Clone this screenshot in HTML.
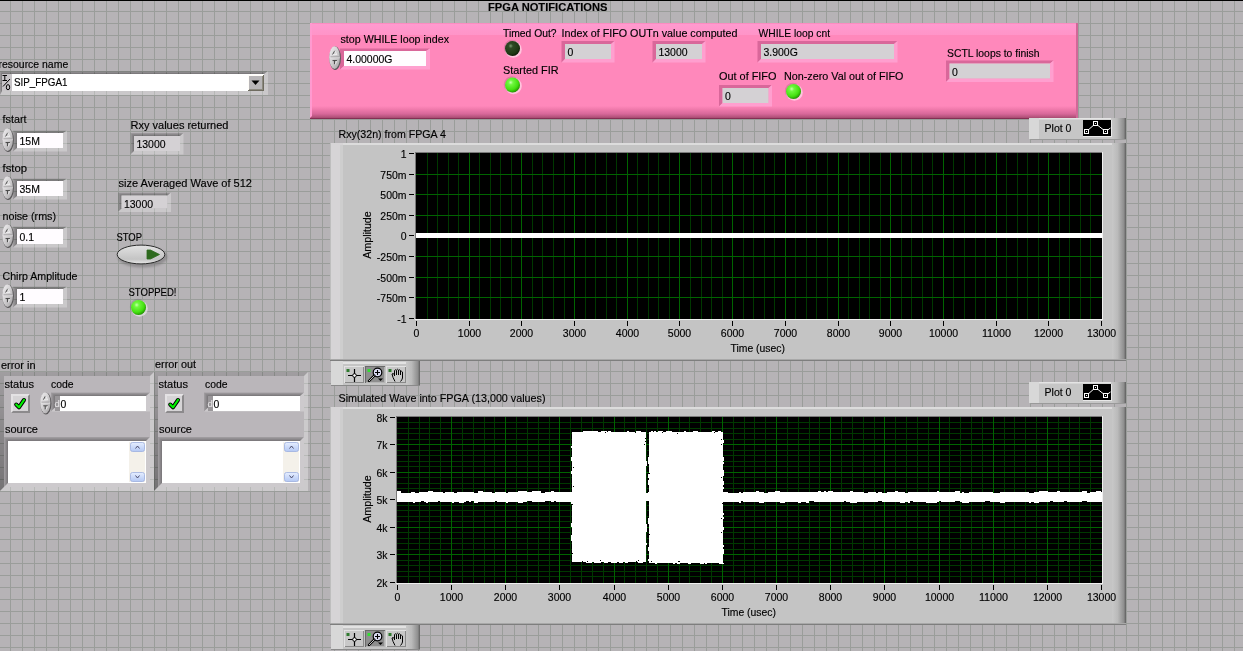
<!DOCTYPE html>
<html><head><meta charset="utf-8"><style>
html,body{margin:0;padding:0;width:1243px;height:651px;overflow:hidden;background:#B6B3B6}
svg{display:block;font-family:'Liberation Sans',sans-serif;will-change:transform}
text{font-family:'Liberation Sans',sans-serif}
</style></head><body>
<svg width="1243" height="651" viewBox="0 0 1243 651" shape-rendering="auto">
<defs>
<pattern id="grid" x="0" y="0" width="12" height="12" patternUnits="userSpaceOnUse" patternTransform="translate(10 11)">
<rect x="0" y="0" width="1" height="12" fill="#9A9D9A"/><rect x="0" y="0" width="12" height="1" fill="#9A9D9A"/></pattern>
<linearGradient id="pinktop" x1="0" y1="0" x2="0" y2="1"><stop offset="0" stop-color="#F984BA"/><stop offset="0.12" stop-color="#FF9ACF"/><stop offset="1" stop-color="#FF94C8"/></linearGradient>
<linearGradient id="pinkbot" x1="0" y1="0" x2="0" y2="1"><stop offset="0" stop-color="#FF88BB"/><stop offset="0.25" stop-color="#F07AAC"/><stop offset="0.6" stop-color="#D8689A"/><stop offset="0.88" stop-color="#B05078"/><stop offset="1" stop-color="#702044"/></linearGradient>
<linearGradient id="cyl" x1="0" y1="0" x2="1" y2="0"><stop offset="0" stop-color="#C8C8C8"/><stop offset="0.4" stop-color="#BABABA"/><stop offset="0.85" stop-color="#8E8E8E"/><stop offset="1" stop-color="#5E5E5E"/></linearGradient>
<radialGradient id="ledon" cx="0.38" cy="0.33" r="0.7"><stop offset="0" stop-color="#C8FFB0"/><stop offset="0.22" stop-color="#70F840"/><stop offset="0.7" stop-color="#44E010"/><stop offset="1" stop-color="#209000"/></radialGradient>
<radialGradient id="ledoff" cx="0.38" cy="0.33" r="0.7"><stop offset="0" stop-color="#7A9A70"/><stop offset="0.22" stop-color="#2E4A24"/><stop offset="0.75" stop-color="#1E3814"/><stop offset="1" stop-color="#0C1A06"/></radialGradient>
<linearGradient id="spin" x1="0" y1="0" x2="1" y2="1"><stop offset="0" stop-color="#F0EEF0"/><stop offset="0.45" stop-color="#D4D2D4"/><stop offset="1" stop-color="#A4A2A4"/></linearGradient>
<linearGradient id="btn" x1="0" y1="0" x2="0" y2="1"><stop offset="0" stop-color="#E4E4E4"/><stop offset="0.3" stop-color="#D6D6D6"/><stop offset="0.75" stop-color="#C4C4C4"/><stop offset="1" stop-color="#E8E8E8"/></linearGradient>
<filter id="blur1" x="-20%" y="-30%" width="140%" height="160%"><feGaussianBlur stdDeviation="1.2"/></filter>
<linearGradient id="sb" x1="0" y1="0" x2="0" y2="1"><stop offset="0" stop-color="#E6EEFF"/><stop offset="1" stop-color="#B4C8F4"/></linearGradient>
<linearGradient id="ftop" x1="0" y1="0" x2="0" y2="1"><stop offset="0" stop-color="#000" stop-opacity="0.12"/><stop offset="1" stop-color="#000" stop-opacity="0.36"/></linearGradient>
<linearGradient id="fleft" x1="0" y1="0" x2="1" y2="0"><stop offset="0" stop-color="#000" stop-opacity="0.12"/><stop offset="1" stop-color="#000" stop-opacity="0.36"/></linearGradient>
</defs>
<rect width="1243" height="651" fill="#B6B3B6"/>
<rect width="1243" height="651" fill="url(#grid)"/>
<rect x="0" y="0" width="1243" height="1" fill="#000" />
<rect x="487" y="1" width="122" height="10" fill="#B6B3B6" />
<text x="488" y="11" font-size="11" textLength="119.5" lengthAdjust="spacingAndGlyphs" font-weight="bold" stroke="#000" stroke-width="0.15" fill="#000" >FPGA NOTIFICATIONS</text>
<rect x="310" y="23" width="768" height="96" fill="#FF88BB" />
<rect x="310" y="23" width="768" height="12" fill="url(#pinktop)" />
<rect x="310" y="106" width="768" height="13" fill="url(#pinkbot)" />
<path d="M310 23 H312 V116 L310 118 Z" fill="#FF9AD0"/>
<rect x="1076" y="23" width="2" height="96" fill="#D06898" />
<text x="340.5" y="43" font-size="11" textLength="108.5" lengthAdjust="spacingAndGlyphs" stroke="#000" stroke-width="0.15" fill="#000" >stop WHILE loop index</text>
<path d="M340 48.5 H430 L426 51.0 H344 V66.0 L340 69.5 Z" fill="#D9679A"/>
<path d="M430 48.5 V69.5 H340 L344 66.0 H426 V51.0 Z" fill="#FF9FCF"/>
<rect x="344" y="51" width="82" height="15" fill="#FFFCFF" />
<ellipse cx="335.15" cy="58.15" rx="5.75" ry="11.75" fill="#5a585a"/>
<ellipse cx="334.55" cy="57.55" rx="5.35" ry="11.35" fill="url(#spin)"/>
<rect x="330" y="57.25" width="9.5" height="1" fill="#E6E4E6"/>
<rect x="330.5" y="56.45" width="8.5" height="0.8" fill="#9C9A9C"/>
<path d="M332.25 54.75 L334.75 50.25 L337.25 54.75 Z" fill="#D8D6D8"/>
<path d="M332.55 54.55 L334.75 50.75" stroke="#3a3a3a" stroke-width="0.9"/>
<path d="M334.75 50.75 L336.95 54.55 H332.75" fill="none" stroke="#F4F4F4" stroke-width="0.7"/>
<path d="M332.25 60.25 H337.25 L334.75 64.75 Z" fill="#C8C6C8"/>
<path d="M332.55 60.55 H336.95 M334.45 60.75 V64.25" stroke="#3a3a3a" stroke-width="0.9"/>
<path d="M336.95 60.95 L335.15 64.55" stroke="#F4F4F4" stroke-width="0.7"/>
<text x="346.5" y="63" font-size="11" textLength="45.91" lengthAdjust="spacingAndGlyphs" stroke="#000" stroke-width="0.15" fill="#000" >4.00000G</text>
<text x="503" y="36.5" font-size="11" textLength="53.5" lengthAdjust="spacingAndGlyphs" stroke="#000" stroke-width="0.15" fill="#000" >Timed Out?</text>
<circle cx="513.4" cy="49.4" r="8.4" fill="#ffffff" opacity="0.5"/>
<circle cx="511.9" cy="47.9" r="8.1" fill="#000000" opacity="0.12"/>
<circle cx="512.5" cy="48.5" r="7.5" fill="url(#ledoff)"/>
<text x="503" y="73.5" font-size="11" textLength="55.5" lengthAdjust="spacingAndGlyphs" stroke="#000" stroke-width="0.15" fill="#000" >Started FIR</text>
<circle cx="513.4" cy="85.9" r="8.4" fill="#ffffff" opacity="0.5"/>
<circle cx="511.9" cy="84.4" r="8.1" fill="#000000" opacity="0.12"/>
<circle cx="512.5" cy="85" r="7.5" fill="url(#ledon)"/>
<text x="561.5" y="36.5" font-size="11" textLength="176" lengthAdjust="spacingAndGlyphs" stroke="#000" stroke-width="0.15" fill="#000" >Index of FIFO OUTn value computed</text>
<path d="M561.5 41 H614.5 L611.0 44 H565.0 V59.0 L561.5 62.5 Z" fill="#D9679A"/>
<path d="M614.5 41 V62.5 H561.5 L565.0 59.0 H611.0 V44 Z" fill="#FF9FCF"/>
<rect x="565" y="44" width="46" height="15" fill="#D4D1D4" />
<text x="567.5" y="56" font-size="11" textLength="5.82" lengthAdjust="spacingAndGlyphs" stroke="#000" stroke-width="0.15" fill="#000" >0</text>
<path d="M652.5 41 H705.5 L702.0 44 H656.0 V59.0 L652.5 62.5 Z" fill="#D9679A"/>
<path d="M705.5 41 V62.5 H652.5 L656.0 59.0 H702.0 V44 Z" fill="#FF9FCF"/>
<rect x="656" y="44" width="46" height="15" fill="#D4D1D4" />
<text x="658.5" y="56" font-size="11" textLength="29.06" lengthAdjust="spacingAndGlyphs" stroke="#000" stroke-width="0.15" fill="#000" >13000</text>
<text x="758.5" y="36.5" font-size="11" textLength="71.5" lengthAdjust="spacingAndGlyphs" stroke="#000" stroke-width="0.15" fill="#000" >WHILE loop cnt</text>
<path d="M757.5 41 H897.5 L894.0 44 H761.0 V59.0 L757.5 62.5 Z" fill="#D9679A"/>
<path d="M897.5 41 V62.5 H757.5 L761.0 59.0 H894.0 V44 Z" fill="#FF9FCF"/>
<rect x="761" y="44" width="133" height="15" fill="#D4D1D4" />
<text x="763.5" y="56" font-size="11" textLength="34.29" lengthAdjust="spacingAndGlyphs" stroke="#000" stroke-width="0.15" fill="#000" >3.900G</text>
<text x="719" y="80" font-size="11" textLength="57.5" lengthAdjust="spacingAndGlyphs" stroke="#000" stroke-width="0.15" fill="#000" >Out of FIFO</text>
<path d="M719.0 85 H772.0 L768.5 88 H722.5 V103.0 L719.0 106.5 Z" fill="#D9679A"/>
<path d="M772.0 85 V106.5 H719.0 L722.5 103.0 H768.5 V88 Z" fill="#FF9FCF"/>
<rect x="722.5" y="88" width="46" height="15" fill="#D4D1D4" />
<text x="725.0" y="100" font-size="11" textLength="5.82" lengthAdjust="spacingAndGlyphs" stroke="#000" stroke-width="0.15" fill="#000" >0</text>
<text x="784" y="80" font-size="11" textLength="119.5" lengthAdjust="spacingAndGlyphs" stroke="#000" stroke-width="0.15" fill="#000" >Non-zero Val out of FIFO</text>
<circle cx="794.4" cy="92.4" r="8.4" fill="#ffffff" opacity="0.5"/>
<circle cx="792.9" cy="90.9" r="8.1" fill="#000000" opacity="0.12"/>
<circle cx="793.5" cy="91.5" r="7.5" fill="url(#ledon)"/>
<text x="947" y="57" font-size="11" textLength="92.5" lengthAdjust="spacingAndGlyphs" stroke="#000" stroke-width="0.15" fill="#000" >SCTL loops to finish</text>
<path d="M946.0 60.5 H1053.5 L1050.0 63.5 H949.5 V78.5 L946.0 82.0 Z" fill="#D9679A"/>
<path d="M1053.5 60.5 V82.0 H946.0 L949.5 78.5 H1050.0 V63.5 Z" fill="#FF9FCF"/>
<rect x="949.5" y="63.5" width="100.5" height="15" fill="#D4D1D4" />
<text x="952.0" y="75.5" font-size="11" textLength="5.82" lengthAdjust="spacingAndGlyphs" stroke="#000" stroke-width="0.15" fill="#000" >0</text>
<text x="-1.5" y="67.5" font-size="11" textLength="69.71" lengthAdjust="spacingAndGlyphs" stroke="#000" stroke-width="0.15" fill="#000" >resource name</text>
<path d="M0 71 H268 L264 74 H2 L0 71 Z" fill="url(#ftop)"/>
<path d="M0 71 L2 74 V91 L0 95 Z" fill="url(#fleft)"/>
<path d="M268 71 V95 H0 L2 91 H264 V74 Z" fill="#FFFFFF" fill-opacity="0.28"/>
<rect x="2" y="74" width="10" height="17" fill="#C8C5C8" />
<path d="M2.5 75.5 H7 M4.8 75.5 V80.5 M2.5 80.5 H7" fill="none" stroke="#000" stroke-width="1"/>
<path d="M3 86.5 L10 79" stroke="#000" stroke-width="1"/>
<ellipse cx="8" cy="87.2" rx="1.7" ry="2.6" fill="none" stroke="#000" stroke-width="1"/>
<rect x="12" y="74" width="252" height="17" fill="#FFFFFF" />
<text x="14" y="86" font-size="11" textLength="53.5" lengthAdjust="spacingAndGlyphs" stroke="#000" stroke-width="0.15" fill="#000" >SIP_FPGA1</text>
<rect x="247" y="74" width="17" height="17" fill="#FFFFFF" />
<rect x="248" y="75" width="16" height="16" fill="#6F6C60" />
<rect x="248" y="75" width="15" height="15" fill="#FFFDF8" />
<rect x="249" y="76" width="14" height="14" fill="#8C8A80" />
<rect x="249" y="76" width="13" height="13" fill="#B8B6B8" />
<path d="M251.5 80.5 H259.5 L255.5 85 Z" fill="#000"/>
<text x="2.5" y="123" font-size="11" textLength="24" lengthAdjust="spacingAndGlyphs" stroke="#000" stroke-width="0.15" fill="#000" >fstart</text>
<path d="M13 130.5 H67 L63 133.0 H17 L13 130.5 Z" fill="url(#ftop)"/>
<path d="M13 130.5 L17 133.0 V148.0 L13 151.5 Z" fill="url(#fleft)"/>
<path d="M67 130.5 V151.5 H13 L17 148.0 H63 V133.0 Z" fill="#FFFFFF" fill-opacity="0.28"/>
<rect x="17" y="133" width="46" height="15" fill="#FFFCFF" />
<ellipse cx="8.15" cy="140.15" rx="5.75" ry="11.75" fill="#5a585a"/>
<ellipse cx="7.55" cy="139.55" rx="5.35" ry="11.35" fill="url(#spin)"/>
<rect x="3" y="139.25" width="9.5" height="1" fill="#E6E4E6"/>
<rect x="3.5" y="138.45" width="8.5" height="0.8" fill="#9C9A9C"/>
<path d="M5.25 136.75 L7.75 132.25 L10.25 136.75 Z" fill="#D8D6D8"/>
<path d="M5.55 136.55 L7.75 132.75" stroke="#3a3a3a" stroke-width="0.9"/>
<path d="M7.75 132.75 L9.95 136.55 H5.75" fill="none" stroke="#F4F4F4" stroke-width="0.7"/>
<path d="M5.25 142.25 H10.25 L7.75 146.75 Z" fill="#C8C6C8"/>
<path d="M5.55 142.55 H9.95 M7.45 142.75 V146.25" stroke="#3a3a3a" stroke-width="0.9"/>
<path d="M9.95 142.95 L8.15 146.55" stroke="#F4F4F4" stroke-width="0.7"/>
<text x="19.5" y="145" font-size="11" textLength="20.34" lengthAdjust="spacingAndGlyphs" stroke="#000" stroke-width="0.15" fill="#000" >15M</text>
<text x="2.5" y="172" font-size="11" textLength="24.5" lengthAdjust="spacingAndGlyphs" stroke="#000" stroke-width="0.15" fill="#000" >fstop</text>
<path d="M13 178.5 H67 L63 181.0 H17 L13 178.5 Z" fill="url(#ftop)"/>
<path d="M13 178.5 L17 181.0 V196.0 L13 199.5 Z" fill="url(#fleft)"/>
<path d="M67 178.5 V199.5 H13 L17 196.0 H63 V181.0 Z" fill="#FFFFFF" fill-opacity="0.28"/>
<rect x="17" y="181" width="46" height="15" fill="#FFFCFF" />
<ellipse cx="8.15" cy="188.15" rx="5.75" ry="11.75" fill="#5a585a"/>
<ellipse cx="7.55" cy="187.55" rx="5.35" ry="11.35" fill="url(#spin)"/>
<rect x="3" y="187.25" width="9.5" height="1" fill="#E6E4E6"/>
<rect x="3.5" y="186.45" width="8.5" height="0.8" fill="#9C9A9C"/>
<path d="M5.25 184.75 L7.75 180.25 L10.25 184.75 Z" fill="#D8D6D8"/>
<path d="M5.55 184.55 L7.75 180.75" stroke="#3a3a3a" stroke-width="0.9"/>
<path d="M7.75 180.75 L9.95 184.55 H5.75" fill="none" stroke="#F4F4F4" stroke-width="0.7"/>
<path d="M5.25 190.25 H10.25 L7.75 194.75 Z" fill="#C8C6C8"/>
<path d="M5.55 190.55 H9.95 M7.45 190.75 V194.25" stroke="#3a3a3a" stroke-width="0.9"/>
<path d="M9.95 190.95 L8.15 194.55" stroke="#F4F4F4" stroke-width="0.7"/>
<text x="19.5" y="193" font-size="11" textLength="20.34" lengthAdjust="spacingAndGlyphs" stroke="#000" stroke-width="0.15" fill="#000" >35M</text>
<text x="2.5" y="220" font-size="11" textLength="53.5" lengthAdjust="spacingAndGlyphs" stroke="#000" stroke-width="0.15" fill="#000" >noise (rms)</text>
<path d="M13 226.5 H67 L63 229.0 H17 L13 226.5 Z" fill="url(#ftop)"/>
<path d="M13 226.5 L17 229.0 V244.0 L13 247.5 Z" fill="url(#fleft)"/>
<path d="M67 226.5 V247.5 H13 L17 244.0 H63 V229.0 Z" fill="#FFFFFF" fill-opacity="0.28"/>
<rect x="17" y="229" width="46" height="15" fill="#FFFCFF" />
<ellipse cx="8.15" cy="236.15" rx="5.75" ry="11.75" fill="#5a585a"/>
<ellipse cx="7.55" cy="235.55" rx="5.35" ry="11.35" fill="url(#spin)"/>
<rect x="3" y="235.25" width="9.5" height="1" fill="#E6E4E6"/>
<rect x="3.5" y="234.45" width="8.5" height="0.8" fill="#9C9A9C"/>
<path d="M5.25 232.75 L7.75 228.25 L10.25 232.75 Z" fill="#D8D6D8"/>
<path d="M5.55 232.55 L7.75 228.75" stroke="#3a3a3a" stroke-width="0.9"/>
<path d="M7.75 228.75 L9.95 232.55 H5.75" fill="none" stroke="#F4F4F4" stroke-width="0.7"/>
<path d="M5.25 238.25 H10.25 L7.75 242.75 Z" fill="#C8C6C8"/>
<path d="M5.55 238.55 H9.95 M7.45 238.75 V242.25" stroke="#3a3a3a" stroke-width="0.9"/>
<path d="M9.95 238.95 L8.15 242.55" stroke="#F4F4F4" stroke-width="0.7"/>
<text x="19.5" y="241" font-size="11" textLength="14.53" lengthAdjust="spacingAndGlyphs" stroke="#000" stroke-width="0.15" fill="#000" >0.1</text>
<text x="2.5" y="280" font-size="11" textLength="75" lengthAdjust="spacingAndGlyphs" stroke="#000" stroke-width="0.15" fill="#000" >Chirp Amplitude</text>
<path d="M13 286.5 H67 L63 289.0 H17 L13 286.5 Z" fill="url(#ftop)"/>
<path d="M13 286.5 L17 289.0 V304.0 L13 307.5 Z" fill="url(#fleft)"/>
<path d="M67 286.5 V307.5 H13 L17 304.0 H63 V289.0 Z" fill="#FFFFFF" fill-opacity="0.28"/>
<rect x="17" y="289" width="46" height="15" fill="#FFFCFF" />
<ellipse cx="8.15" cy="296.15" rx="5.75" ry="11.75" fill="#5a585a"/>
<ellipse cx="7.55" cy="295.55" rx="5.35" ry="11.35" fill="url(#spin)"/>
<rect x="3" y="295.25" width="9.5" height="1" fill="#E6E4E6"/>
<rect x="3.5" y="294.45" width="8.5" height="0.8" fill="#9C9A9C"/>
<path d="M5.25 292.75 L7.75 288.25 L10.25 292.75 Z" fill="#D8D6D8"/>
<path d="M5.55 292.55 L7.75 288.75" stroke="#3a3a3a" stroke-width="0.9"/>
<path d="M7.75 288.75 L9.95 292.55 H5.75" fill="none" stroke="#F4F4F4" stroke-width="0.7"/>
<path d="M5.25 298.25 H10.25 L7.75 302.75 Z" fill="#C8C6C8"/>
<path d="M5.55 298.55 H9.95 M7.45 298.75 V302.25" stroke="#3a3a3a" stroke-width="0.9"/>
<path d="M9.95 298.95 L8.15 302.55" stroke="#F4F4F4" stroke-width="0.7"/>
<text x="19.5" y="301" font-size="11" textLength="5.82" lengthAdjust="spacingAndGlyphs" stroke="#000" stroke-width="0.15" fill="#000" >1</text>
<text x="130.5" y="128.5" font-size="11" textLength="98" lengthAdjust="spacingAndGlyphs" stroke="#000" stroke-width="0.15" fill="#000" >Rxy values returned</text>
<path d="M130.5 133 H183.5 L180.0 136 H134.0 L130.5 133 Z" fill="url(#ftop)"/>
<path d="M130.5 133 L134.0 136 V151.0 L130.5 154.5 Z" fill="url(#fleft)"/>
<path d="M183.5 133 V154.5 H130.5 L134.0 151.0 H180.0 V136 Z" fill="#FFFFFF" fill-opacity="0.28"/>
<rect x="134" y="136" width="46" height="15" fill="#D4D1D4" />
<text x="136.5" y="148" font-size="11" textLength="29.06" lengthAdjust="spacingAndGlyphs" stroke="#000" stroke-width="0.15" fill="#000" >13000</text>
<text x="118.5" y="187" font-size="11" textLength="133.5" lengthAdjust="spacingAndGlyphs" stroke="#000" stroke-width="0.15" fill="#000" >size Averaged Wave of 512</text>
<path d="M118.0 192.5 H171.0 L167.5 195.5 H121.5 L118.0 192.5 Z" fill="url(#ftop)"/>
<path d="M118.0 192.5 L121.5 195.5 V208.5 L118.0 212.0 Z" fill="url(#fleft)"/>
<path d="M171.0 192.5 V212.0 H118.0 L121.5 208.5 H167.5 V195.5 Z" fill="#FFFFFF" fill-opacity="0.28"/>
<rect x="121.5" y="195.5" width="46" height="13" fill="#D4D1D4" />
<text x="124.0" y="207.5" font-size="11" textLength="29.06" lengthAdjust="spacingAndGlyphs" stroke="#000" stroke-width="0.15" fill="#000" >13000</text>
<text x="116.5" y="240.5" font-size="11" textLength="25.5" lengthAdjust="spacingAndGlyphs" stroke="#000" stroke-width="0.15" fill="#000" >STOP</text>
<ellipse cx="142.5" cy="257" rx="25" ry="10.5" fill="#6e6c6e" opacity="0.5" filter="url(#blur1)"/>
<ellipse cx="141" cy="254.5" rx="23.8" ry="9.4" fill="url(#btn)" stroke="#2a2a2a" stroke-width="1"/>
<path d="M147 250 H150.5 L159.5 254.5 L150.5 259 H147 Z" fill="#2E6A1E" stroke="#2E6A1E" stroke-width="0.8" stroke-linejoin="round"/>
<text x="128.5" y="296" font-size="11" textLength="48" lengthAdjust="spacingAndGlyphs" stroke="#000" stroke-width="0.15" fill="#000" >STOPPED!</text>
<circle cx="139.4" cy="308.4" r="8.4" fill="#ffffff" opacity="0.5"/>
<circle cx="137.9" cy="306.9" r="8.1" fill="#000000" opacity="0.12"/>
<circle cx="138.5" cy="307.5" r="7.5" fill="url(#ledon)"/>
<text x="1" y="368.5" font-size="11" textLength="34.5" lengthAdjust="spacingAndGlyphs" stroke="#000" stroke-width="0.15" fill="#000" >error in</text>
<path d="M0 372 H154 L150 376 H4 V487 L0 491 Z" fill="url(#ftop)"/>
<path d="M154 372 V491 H0 L4 487 H150 V376 Z" fill="#FFFFFF" fill-opacity="0.3"/>
<rect x="4" y="376" width="146" height="111" fill="#BAB6BA" />
<text x="4.5" y="388" font-size="11" textLength="29.5" lengthAdjust="spacingAndGlyphs" stroke="#000" stroke-width="0.15" fill="#000" >status</text>
<text x="51" y="388" font-size="11" textLength="22.5" lengthAdjust="spacingAndGlyphs" stroke="#000" stroke-width="0.15" fill="#000" >code</text>
<rect x="11" y="394" width="19" height="19" fill="#E4E2E4" />
<path d="M30 394 V413 H11 L13 411 H28 V396 Z" fill="#8C8A8C"/>
<rect x="13" y="396" width="15" height="15" fill="#D6D4D6" />
<path d="M16.2 404.5 L19 407.3 L24 400" fill="none" stroke="#000" stroke-width="4" stroke-linejoin="round" stroke-linecap="round"/>
<path d="M16.2 404.5 L19 407.3 L24 400" fill="none" stroke="#00F000" stroke-width="2.2" stroke-linejoin="round" stroke-linecap="round"/>
<ellipse cx="45.9" cy="403.4" rx="5.5" ry="11.0" fill="#5a585a"/>
<ellipse cx="45.3" cy="402.8" rx="5.1" ry="10.6" fill="url(#spin)"/>
<rect x="41" y="402.5" width="9" height="1" fill="#E6E4E6"/>
<rect x="41.5" y="401.7" width="8" height="0.8" fill="#9C9A9C"/>
<path d="M43.0 400.0 L45.5 395.5 L48.0 400.0 Z" fill="#D8D6D8"/>
<path d="M43.3 399.8 L45.5 396.0" stroke="#3a3a3a" stroke-width="0.9"/>
<path d="M45.5 396.0 L47.7 399.8 H43.5" fill="none" stroke="#F4F4F4" stroke-width="0.7"/>
<path d="M43.0 405.5 H48.0 L45.5 410.0 Z" fill="#C8C6C8"/>
<path d="M43.3 405.8 H47.7 M45.2 406.0 V409.5" stroke="#3a3a3a" stroke-width="0.9"/>
<path d="M47.7 406.2 L45.9 409.8" stroke="#F4F4F4" stroke-width="0.7"/>
<path d="M51 392.5 H150 L146 396.0 H55 L51 392.5 Z" fill="url(#ftop)"/>
<path d="M51 392.5 L55 396.0 V407.5 L51 411.5 Z" fill="url(#fleft)"/>
<path d="M150 392.5 V411.5 H51 L55 407.5 H146 V396.0 Z" fill="#FFFFFF" fill-opacity="0.28"/>
<rect x="55" y="396" width="6" height="15" fill="#9A979A" />
<text x="54.4" y="407" font-size="9.5" stroke="#E4E2E4" stroke-width="0.1" fill="#E4E2E4" >d</text>
<rect x="60" y="396" width="86" height="15" fill="#FFFFFF" />
<text x="60.5" y="408" font-size="11" textLength="5.82" lengthAdjust="spacingAndGlyphs" stroke="#000" stroke-width="0.15" fill="#000" >0</text>
<text x="5" y="433" font-size="11" textLength="33" lengthAdjust="spacingAndGlyphs" stroke="#000" stroke-width="0.15" fill="#000" >source</text>
<path d="M4 437 H150 L146 441 H8 L4 437 Z" fill="url(#ftop)"/>
<path d="M4 437 L8 441 V483 L4 487 Z" fill="url(#fleft)"/>
<path d="M150 437 V487 H4 L8 483 H146 V441 Z" fill="#FFFFFF" fill-opacity="0.28"/>
<rect x="8" y="441" width="138" height="42" fill="#FFFFFF" />
<rect x="129" y="442" width="16" height="40" fill="#F4F1EA" />
<rect x="130.5" y="442.5" width="14" height="9" rx="2" fill="url(#sb)" stroke="#9DB0E0" stroke-width="0.8"/>
<path d="M135.5 448.5 L137.5 446.0 L139.5 448.5" fill="none" stroke="#404060" stroke-width="0.9"/>
<rect x="130.5" y="472.5" width="14" height="9" rx="2" fill="url(#sb)" stroke="#9DB0E0" stroke-width="0.8"/>
<path d="M135.5 475.5 L137.5 478.0 L139.5 475.5" fill="none" stroke="#404060" stroke-width="0.9"/>
<text x="155" y="367.8" font-size="11" textLength="41" lengthAdjust="spacingAndGlyphs" stroke="#000" stroke-width="0.15" fill="#000" >error out</text>
<path d="M154 372 H308 L304 376 H158 V487 L154 491 Z" fill="url(#ftop)"/>
<path d="M308 372 V491 H154 L158 487 H304 V376 Z" fill="#FFFFFF" fill-opacity="0.3"/>
<rect x="158" y="376" width="146" height="111" fill="#BAB6BA" />
<text x="158.5" y="388" font-size="11" textLength="29.5" lengthAdjust="spacingAndGlyphs" stroke="#000" stroke-width="0.15" fill="#000" >status</text>
<text x="205" y="388" font-size="11" textLength="22.5" lengthAdjust="spacingAndGlyphs" stroke="#000" stroke-width="0.15" fill="#000" >code</text>
<rect x="165" y="394" width="19" height="19" fill="#E4E2E4" />
<path d="M184 394 V413 H165 L167 411 H182 V396 Z" fill="#8C8A8C"/>
<rect x="167" y="396" width="15" height="15" fill="#D6D4D6" />
<path d="M170.2 404.5 L173 407.3 L178 400" fill="none" stroke="#000" stroke-width="4" stroke-linejoin="round" stroke-linecap="round"/>
<path d="M170.2 404.5 L173 407.3 L178 400" fill="none" stroke="#00F000" stroke-width="2.2" stroke-linejoin="round" stroke-linecap="round"/>
<path d="M204 392.5 H304 L300 396.0 H208 L204 392.5 Z" fill="url(#ftop)"/>
<path d="M204 392.5 L208 396.0 V407.5 L204 411.5 Z" fill="url(#fleft)"/>
<path d="M304 392.5 V411.5 H204 L208 407.5 H300 V396.0 Z" fill="#FFFFFF" fill-opacity="0.28"/>
<rect x="208" y="396" width="6" height="15" fill="#9A979A" />
<text x="207.4" y="407" font-size="9.5" stroke="#E4E2E4" stroke-width="0.1" fill="#E4E2E4" >d</text>
<rect x="213" y="396" width="87" height="15" fill="#FFFFFF" />
<text x="213.5" y="408" font-size="11" textLength="5.82" lengthAdjust="spacingAndGlyphs" stroke="#000" stroke-width="0.15" fill="#000" >0</text>
<text x="159" y="433" font-size="11" textLength="33" lengthAdjust="spacingAndGlyphs" stroke="#000" stroke-width="0.15" fill="#000" >source</text>
<path d="M158 437 H304 L300 441 H162 L158 437 Z" fill="url(#ftop)"/>
<path d="M158 437 L162 441 V483 L158 487 Z" fill="url(#fleft)"/>
<path d="M304 437 V487 H158 L162 483 H300 V441 Z" fill="#FFFFFF" fill-opacity="0.28"/>
<rect x="162" y="441" width="138" height="42" fill="#FFFFFF" />
<rect x="283" y="442" width="16" height="40" fill="#F4F1EA" />
<rect x="284.5" y="442.5" width="14" height="9" rx="2" fill="url(#sb)" stroke="#9DB0E0" stroke-width="0.8"/>
<path d="M289.5 448.5 L291.5 446.0 L293.5 448.5" fill="none" stroke="#404060" stroke-width="0.9"/>
<rect x="284.5" y="472.5" width="14" height="9" rx="2" fill="url(#sb)" stroke="#9DB0E0" stroke-width="0.8"/>
<path d="M289.5 475.5 L291.5 478.0 L293.5 475.5" fill="none" stroke="#404060" stroke-width="0.9"/>
<text x="338.5" y="138" font-size="11" textLength="107.5" lengthAdjust="spacingAndGlyphs" stroke="#000" stroke-width="0.15" fill="#000" >Rxy(32n) from FPGA 4</text>
<rect x="330" y="143" width="796" height="218" fill="#C4C4C4" />
<rect x="330" y="143" width="782" height="2" fill="#DCDCDC" />
<rect x="331" y="143" width="12" height="218" fill="#D6D4D6" />
<rect x="340" y="145" width="3" height="214" fill="#CECECE" />
<rect x="330" y="143" width="1" height="218" fill="#BEBEBE" />
<rect x="1112" y="143" width="14" height="218" fill="url(#cyl)" />
<rect x="330" y="359" width="796" height="1" fill="#A8A8A8" />
<rect x="330" y="360" width="796" height="1" fill="#7E7E7E" />
<rect x="416" y="153" width="686" height="166" fill="#000" />
<rect x="427" y="153" width="1" height="166" fill="#003800" />
<rect x="437" y="153" width="1" height="166" fill="#003800" />
<rect x="448" y="153" width="1" height="166" fill="#003800" />
<rect x="458" y="153" width="1" height="166" fill="#003800" />
<rect x="469" y="153" width="1" height="166" fill="#006400" />
<rect x="479" y="153" width="1" height="166" fill="#003800" />
<rect x="490" y="153" width="1" height="166" fill="#003800" />
<rect x="500" y="153" width="1" height="166" fill="#003800" />
<rect x="511" y="153" width="1" height="166" fill="#003800" />
<rect x="521" y="153" width="1" height="166" fill="#006400" />
<rect x="532" y="153" width="1" height="166" fill="#003800" />
<rect x="542" y="153" width="1" height="166" fill="#003800" />
<rect x="553" y="153" width="1" height="166" fill="#003800" />
<rect x="564" y="153" width="1" height="166" fill="#003800" />
<rect x="574" y="153" width="1" height="166" fill="#006400" />
<rect x="585" y="153" width="1" height="166" fill="#003800" />
<rect x="595" y="153" width="1" height="166" fill="#003800" />
<rect x="606" y="153" width="1" height="166" fill="#003800" />
<rect x="616" y="153" width="1" height="166" fill="#003800" />
<rect x="627" y="153" width="1" height="166" fill="#006400" />
<rect x="637" y="153" width="1" height="166" fill="#003800" />
<rect x="648" y="153" width="1" height="166" fill="#003800" />
<rect x="658" y="153" width="1" height="166" fill="#003800" />
<rect x="669" y="153" width="1" height="166" fill="#003800" />
<rect x="679" y="153" width="1" height="166" fill="#006400" />
<rect x="690" y="153" width="1" height="166" fill="#003800" />
<rect x="701" y="153" width="1" height="166" fill="#003800" />
<rect x="711" y="153" width="1" height="166" fill="#003800" />
<rect x="722" y="153" width="1" height="166" fill="#003800" />
<rect x="732" y="153" width="1" height="166" fill="#006400" />
<rect x="743" y="153" width="1" height="166" fill="#003800" />
<rect x="753" y="153" width="1" height="166" fill="#003800" />
<rect x="764" y="153" width="1" height="166" fill="#003800" />
<rect x="774" y="153" width="1" height="166" fill="#003800" />
<rect x="785" y="153" width="1" height="166" fill="#006400" />
<rect x="795" y="153" width="1" height="166" fill="#003800" />
<rect x="806" y="153" width="1" height="166" fill="#003800" />
<rect x="816" y="153" width="1" height="166" fill="#003800" />
<rect x="827" y="153" width="1" height="166" fill="#003800" />
<rect x="838" y="153" width="1" height="166" fill="#006400" />
<rect x="848" y="153" width="1" height="166" fill="#003800" />
<rect x="859" y="153" width="1" height="166" fill="#003800" />
<rect x="869" y="153" width="1" height="166" fill="#003800" />
<rect x="880" y="153" width="1" height="166" fill="#003800" />
<rect x="890" y="153" width="1" height="166" fill="#006400" />
<rect x="901" y="153" width="1" height="166" fill="#003800" />
<rect x="911" y="153" width="1" height="166" fill="#003800" />
<rect x="922" y="153" width="1" height="166" fill="#003800" />
<rect x="932" y="153" width="1" height="166" fill="#003800" />
<rect x="943" y="153" width="1" height="166" fill="#006400" />
<rect x="953" y="153" width="1" height="166" fill="#003800" />
<rect x="964" y="153" width="1" height="166" fill="#003800" />
<rect x="975" y="153" width="1" height="166" fill="#003800" />
<rect x="985" y="153" width="1" height="166" fill="#003800" />
<rect x="996" y="153" width="1" height="166" fill="#006400" />
<rect x="1006" y="153" width="1" height="166" fill="#003800" />
<rect x="1017" y="153" width="1" height="166" fill="#003800" />
<rect x="1027" y="153" width="1" height="166" fill="#003800" />
<rect x="1038" y="153" width="1" height="166" fill="#003800" />
<rect x="1048" y="153" width="1" height="166" fill="#006400" />
<rect x="1059" y="153" width="1" height="166" fill="#003800" />
<rect x="1069" y="153" width="1" height="166" fill="#003800" />
<rect x="1080" y="153" width="1" height="166" fill="#003800" />
<rect x="1090" y="153" width="1" height="166" fill="#003800" />
<rect x="416" y="174" width="686" height="1" fill="#006400" />
<rect x="416" y="194" width="686" height="1" fill="#006400" />
<rect x="416" y="215" width="686" height="1" fill="#006400" />
<rect x="416" y="235" width="686" height="1" fill="#006400" />
<rect x="416" y="256" width="686" height="1" fill="#006400" />
<rect x="416" y="277" width="686" height="1" fill="#006400" />
<rect x="416" y="297" width="686" height="1" fill="#006400" />
<rect x="416" y="233" width="686" height="5" fill="#fff" />
<rect x="415" y="152" width="687" height="1" fill="#7a7a7a" />
<rect x="415" y="152" width="1" height="167" fill="#7a7a7a" />
<rect x="415" y="319" width="688" height="1" fill="#F0F0F0" />
<rect x="1102" y="152" width="1" height="168" fill="#F0F0F0" />
<rect x="409" y="153" width="5" height="1" fill="#000" />
<text x="406.5" y="158" font-size="11" text-anchor="end" textLength="5.82" lengthAdjust="spacingAndGlyphs" stroke="#000" stroke-width="0.15" fill="#000" >1</text>
<rect x="409" y="174" width="5" height="1" fill="#000" />
<text x="406.5" y="179" font-size="11" text-anchor="end" textLength="26.15" lengthAdjust="spacingAndGlyphs" stroke="#000" stroke-width="0.15" fill="#000" >750m</text>
<rect x="409" y="194" width="5" height="1" fill="#000" />
<text x="406.5" y="199" font-size="11" text-anchor="end" textLength="26.15" lengthAdjust="spacingAndGlyphs" stroke="#000" stroke-width="0.15" fill="#000" >500m</text>
<rect x="409" y="215" width="5" height="1" fill="#000" />
<text x="406.5" y="220" font-size="11" text-anchor="end" textLength="26.15" lengthAdjust="spacingAndGlyphs" stroke="#000" stroke-width="0.15" fill="#000" >250m</text>
<rect x="409" y="235" width="5" height="1" fill="#000" />
<text x="406.5" y="240" font-size="11" text-anchor="end" textLength="5.82" lengthAdjust="spacingAndGlyphs" stroke="#000" stroke-width="0.15" fill="#000" >0</text>
<rect x="409" y="256" width="5" height="1" fill="#000" />
<text x="406.5" y="261" font-size="11" text-anchor="end" textLength="29.63" lengthAdjust="spacingAndGlyphs" stroke="#000" stroke-width="0.15" fill="#000" >-250m</text>
<rect x="409" y="277" width="5" height="1" fill="#000" />
<text x="406.5" y="282" font-size="11" text-anchor="end" textLength="29.63" lengthAdjust="spacingAndGlyphs" stroke="#000" stroke-width="0.15" fill="#000" >-500m</text>
<rect x="409" y="297" width="5" height="1" fill="#000" />
<text x="406.5" y="302" font-size="11" text-anchor="end" textLength="29.63" lengthAdjust="spacingAndGlyphs" stroke="#000" stroke-width="0.15" fill="#000" >-750m</text>
<rect x="409" y="318" width="5" height="1" fill="#000" />
<text x="406.5" y="323" font-size="11" text-anchor="end" textLength="9.29" lengthAdjust="spacingAndGlyphs" stroke="#000" stroke-width="0.15" fill="#000" >-1</text>
<rect x="416" y="321" width="1" height="5" fill="#000" />
<text x="416.5" y="337" font-size="11" text-anchor="middle" textLength="5.85" lengthAdjust="spacingAndGlyphs" stroke="#000" stroke-width="0.15" fill="#000" >0</text>
<rect x="469" y="321" width="1" height="5" fill="#000" />
<text x="469.5" y="337" font-size="11" text-anchor="middle" textLength="23.4" lengthAdjust="spacingAndGlyphs" stroke="#000" stroke-width="0.15" fill="#000" >1000</text>
<rect x="521" y="321" width="1" height="5" fill="#000" />
<text x="521.5" y="337" font-size="11" text-anchor="middle" textLength="23.4" lengthAdjust="spacingAndGlyphs" stroke="#000" stroke-width="0.15" fill="#000" >2000</text>
<rect x="574" y="321" width="1" height="5" fill="#000" />
<text x="574.5" y="337" font-size="11" text-anchor="middle" textLength="23.4" lengthAdjust="spacingAndGlyphs" stroke="#000" stroke-width="0.15" fill="#000" >3000</text>
<rect x="627" y="321" width="1" height="5" fill="#000" />
<text x="627.5" y="337" font-size="11" text-anchor="middle" textLength="23.4" lengthAdjust="spacingAndGlyphs" stroke="#000" stroke-width="0.15" fill="#000" >4000</text>
<rect x="679" y="321" width="1" height="5" fill="#000" />
<text x="679.5" y="337" font-size="11" text-anchor="middle" textLength="23.4" lengthAdjust="spacingAndGlyphs" stroke="#000" stroke-width="0.15" fill="#000" >5000</text>
<rect x="732" y="321" width="1" height="5" fill="#000" />
<text x="732.5" y="337" font-size="11" text-anchor="middle" textLength="23.4" lengthAdjust="spacingAndGlyphs" stroke="#000" stroke-width="0.15" fill="#000" >6000</text>
<rect x="785" y="321" width="1" height="5" fill="#000" />
<text x="785.5" y="337" font-size="11" text-anchor="middle" textLength="23.4" lengthAdjust="spacingAndGlyphs" stroke="#000" stroke-width="0.15" fill="#000" >7000</text>
<rect x="838" y="321" width="1" height="5" fill="#000" />
<text x="838.5" y="337" font-size="11" text-anchor="middle" textLength="23.4" lengthAdjust="spacingAndGlyphs" stroke="#000" stroke-width="0.15" fill="#000" >8000</text>
<rect x="890" y="321" width="1" height="5" fill="#000" />
<text x="890.5" y="337" font-size="11" text-anchor="middle" textLength="23.4" lengthAdjust="spacingAndGlyphs" stroke="#000" stroke-width="0.15" fill="#000" >9000</text>
<rect x="943" y="321" width="1" height="5" fill="#000" />
<text x="943.5" y="337" font-size="11" text-anchor="middle" textLength="29.25" lengthAdjust="spacingAndGlyphs" stroke="#000" stroke-width="0.15" fill="#000" >10000</text>
<rect x="996" y="321" width="1" height="5" fill="#000" />
<text x="996.5" y="337" font-size="11" text-anchor="middle" textLength="29.25" lengthAdjust="spacingAndGlyphs" stroke="#000" stroke-width="0.15" fill="#000" >11000</text>
<rect x="1048" y="321" width="1" height="5" fill="#000" />
<text x="1048.5" y="337" font-size="11" text-anchor="middle" textLength="29.25" lengthAdjust="spacingAndGlyphs" stroke="#000" stroke-width="0.15" fill="#000" >12000</text>
<rect x="1101" y="321" width="1" height="5" fill="#000" />
<text x="1101.5" y="337" font-size="11" text-anchor="middle" textLength="29.25" lengthAdjust="spacingAndGlyphs" stroke="#000" stroke-width="0.15" fill="#000" >13000</text>
<text x="371" y="235" font-size="11" text-anchor="middle" textLength="47.5" lengthAdjust="spacingAndGlyphs" stroke="#000" stroke-width="0.15" fill="#000" transform="rotate(-90 371 235)">Amplitude</text>
<text x="730.5" y="351.5" font-size="11" textLength="54.5" lengthAdjust="spacingAndGlyphs" stroke="#000" stroke-width="0.15" fill="#000" >Time (usec)</text>
<rect x="1029" y="118" width="97" height="21" fill="#C6C6C6" />
<rect x="1029" y="118" width="97" height="1.5" fill="#E4E4E4" />
<rect x="1029" y="118" width="10" height="21" fill="#D8D8D8" />
<rect x="1031" y="139" width="95" height="1" fill="#9a9a9a" />
<rect x="1111" y="118" width="15" height="21" fill="url(#cyl)" />
<text x="1044.5" y="131.5" font-size="11" textLength="27" lengthAdjust="spacingAndGlyphs" stroke="#000" stroke-width="0.15" fill="#000" >Plot 0</text>
<rect x="1083" y="120" width="28" height="16" fill="#000" />
<rect x="1083" y="136" width="29" height="1" fill="#E8E8E8" />
<rect x="1111" y="120" width="1" height="17" fill="#E8E8E8" />
<path d="M1086.5 131.5 L1095.5 123.5 L1105.5 131.5 L1110.5 128" fill="none" stroke="#fff" stroke-width="1"/>
<rect x="1084.5" y="129.5" width="4" height="4" fill="#000" stroke="#fff" stroke-width="1"/>
<rect x="1086.0" y="131.0" width="1" height="1" fill="#fff" />
<rect x="1093.5" y="121.5" width="4" height="4" fill="#000" stroke="#fff" stroke-width="1"/>
<rect x="1095.0" y="123.0" width="1" height="1" fill="#fff" />
<rect x="1103.5" y="129.5" width="4" height="4" fill="#000" stroke="#fff" stroke-width="1"/>
<rect x="1105.0" y="131.0" width="1" height="1" fill="#fff" />
<rect x="331" y="361" width="89" height="25" fill="#C4C4C4" />
<rect x="331" y="361" width="89" height="1" fill="#D0D0D0" opacity="0.6"/>
<rect x="331" y="362" width="82" height="2" fill="#E2E2E2" />
<rect x="331" y="361" width="12" height="25" fill="#D8D8D8" />
<rect x="406" y="361" width="14" height="25" fill="url(#cyl)" />
<rect x="331" y="385" width="89" height="1" fill="#8a8a8a" />
<rect x="344" y="366" width="20" height="17" fill="#E2E2E2" />
<rect x="345" y="367" width="19" height="16" fill="#8a8a8a" />
<rect x="345" y="367" width="18" height="15" fill="#C8C8C8" />
<rect x="346.5" y="369" width="3" height="3" fill="#2E7A2E" />
<rect x="365" y="366" width="20" height="17" fill="#6a6a6a" />
<rect x="366" y="367" width="19" height="16" fill="#b4b4b4" />
<rect x="366" y="367" width="18" height="15" fill="#8E8E8E" />
<rect x="367.5" y="369" width="3" height="3" fill="#30E030" />
<rect x="386" y="366" width="20" height="17" fill="#E2E2E2" />
<rect x="387" y="367" width="19" height="16" fill="#8a8a8a" />
<rect x="387" y="367" width="18" height="15" fill="#C8C8C8" />
<rect x="388.5" y="369" width="3" height="3" fill="#2E7A2E" />
<path d="M348.0 375.5 H361.0 M354.5 369.0 V382.0" stroke="#000" stroke-width="1.2"/>
<circle cx="354.5" cy="375.5" r="1.8" fill="#fff" stroke="#000" stroke-width="1"/>
<circle cx="377.5" cy="372.5" r="4.3" fill="#DDDDF4" stroke="#000" stroke-width="1.2"/>
<path d="M375.0 372.5 H380.0 M377.5 370.0 V375.0" stroke="#000" stroke-width="1.1"/>
<path d="M374.3 375.7 L369.0 381.0" stroke="#000" stroke-width="2.4" stroke-linecap="round"/>
<path d="M374.3 375.7 L369.0 381.0" stroke="#ddd" stroke-width="0.9"/>
<path d="M378.0 378.5 H383.0 L380.5 381.0 Z" fill="#000"/>
<path d="M392 374 Q393.5 372.5 394.5 375 M394.5 376 V370.5 Q395.5 369 396.5 370.5 V375 M396.5 370 Q397.5 368.5 398.5 370 V375 M398.5 370.5 Q399.5 369 400.5 370.5 V375 M400.5 372 Q401.5 370.5 402.5 372 V378 Q402 380 400.5 381.5 M392 374 Q392.5 377 395 381.5" fill="none" stroke="#000" stroke-width="1"/>
<text x="338.5" y="402" font-size="11" textLength="207" lengthAdjust="spacingAndGlyphs" stroke="#000" stroke-width="0.15" fill="#000" >Simulated Wave into FPGA (13,000 values)</text>
<rect x="330" y="407" width="796" height="218" fill="#C4C4C4" />
<rect x="330" y="407" width="782" height="2" fill="#DCDCDC" />
<rect x="331" y="407" width="12" height="218" fill="#D6D4D6" />
<rect x="340" y="409" width="3" height="214" fill="#CECECE" />
<rect x="330" y="407" width="1" height="218" fill="#BEBEBE" />
<rect x="1112" y="407" width="14" height="218" fill="url(#cyl)" />
<rect x="330" y="623" width="796" height="1" fill="#A8A8A8" />
<rect x="330" y="624" width="796" height="1" fill="#7E7E7E" />
<rect x="397" y="417" width="705" height="166" fill="#000" />
<rect x="397" y="422" width="705" height="1" fill="#003800" />
<rect x="397" y="428" width="705" height="1" fill="#003800" />
<rect x="397" y="433" width="705" height="1" fill="#003800" />
<rect x="397" y="439" width="705" height="1" fill="#003800" />
<rect x="397" y="450" width="705" height="1" fill="#003800" />
<rect x="397" y="455" width="705" height="1" fill="#003800" />
<rect x="397" y="461" width="705" height="1" fill="#003800" />
<rect x="397" y="466" width="705" height="1" fill="#003800" />
<rect x="397" y="477" width="705" height="1" fill="#003800" />
<rect x="397" y="483" width="705" height="1" fill="#003800" />
<rect x="397" y="488" width="705" height="1" fill="#003800" />
<rect x="397" y="494" width="705" height="1" fill="#003800" />
<rect x="397" y="505" width="705" height="1" fill="#003800" />
<rect x="397" y="510" width="705" height="1" fill="#003800" />
<rect x="397" y="516" width="705" height="1" fill="#003800" />
<rect x="397" y="521" width="705" height="1" fill="#003800" />
<rect x="397" y="532" width="705" height="1" fill="#003800" />
<rect x="397" y="538" width="705" height="1" fill="#003800" />
<rect x="397" y="543" width="705" height="1" fill="#003800" />
<rect x="397" y="549" width="705" height="1" fill="#003800" />
<rect x="397" y="560" width="705" height="1" fill="#003800" />
<rect x="397" y="565" width="705" height="1" fill="#003800" />
<rect x="397" y="571" width="705" height="1" fill="#003800" />
<rect x="397" y="576" width="705" height="1" fill="#003800" />
<rect x="408" y="417" width="1" height="166" fill="#003800" />
<rect x="419" y="417" width="1" height="166" fill="#003800" />
<rect x="429" y="417" width="1" height="166" fill="#003800" />
<rect x="440" y="417" width="1" height="166" fill="#003800" />
<rect x="451" y="417" width="1" height="166" fill="#006400" />
<rect x="462" y="417" width="1" height="166" fill="#003800" />
<rect x="473" y="417" width="1" height="166" fill="#003800" />
<rect x="484" y="417" width="1" height="166" fill="#003800" />
<rect x="494" y="417" width="1" height="166" fill="#003800" />
<rect x="505" y="417" width="1" height="166" fill="#006400" />
<rect x="516" y="417" width="1" height="166" fill="#003800" />
<rect x="527" y="417" width="1" height="166" fill="#003800" />
<rect x="538" y="417" width="1" height="166" fill="#003800" />
<rect x="549" y="417" width="1" height="166" fill="#003800" />
<rect x="559" y="417" width="1" height="166" fill="#006400" />
<rect x="570" y="417" width="1" height="166" fill="#003800" />
<rect x="581" y="417" width="1" height="166" fill="#003800" />
<rect x="592" y="417" width="1" height="166" fill="#003800" />
<rect x="603" y="417" width="1" height="166" fill="#003800" />
<rect x="614" y="417" width="1" height="166" fill="#006400" />
<rect x="624" y="417" width="1" height="166" fill="#003800" />
<rect x="635" y="417" width="1" height="166" fill="#003800" />
<rect x="646" y="417" width="1" height="166" fill="#003800" />
<rect x="657" y="417" width="1" height="166" fill="#003800" />
<rect x="668" y="417" width="1" height="166" fill="#006400" />
<rect x="679" y="417" width="1" height="166" fill="#003800" />
<rect x="689" y="417" width="1" height="166" fill="#003800" />
<rect x="700" y="417" width="1" height="166" fill="#003800" />
<rect x="711" y="417" width="1" height="166" fill="#003800" />
<rect x="722" y="417" width="1" height="166" fill="#006400" />
<rect x="733" y="417" width="1" height="166" fill="#003800" />
<rect x="744" y="417" width="1" height="166" fill="#003800" />
<rect x="754" y="417" width="1" height="166" fill="#003800" />
<rect x="765" y="417" width="1" height="166" fill="#003800" />
<rect x="776" y="417" width="1" height="166" fill="#006400" />
<rect x="787" y="417" width="1" height="166" fill="#003800" />
<rect x="798" y="417" width="1" height="166" fill="#003800" />
<rect x="809" y="417" width="1" height="166" fill="#003800" />
<rect x="819" y="417" width="1" height="166" fill="#003800" />
<rect x="830" y="417" width="1" height="166" fill="#006400" />
<rect x="841" y="417" width="1" height="166" fill="#003800" />
<rect x="852" y="417" width="1" height="166" fill="#003800" />
<rect x="863" y="417" width="1" height="166" fill="#003800" />
<rect x="874" y="417" width="1" height="166" fill="#003800" />
<rect x="884" y="417" width="1" height="166" fill="#006400" />
<rect x="895" y="417" width="1" height="166" fill="#003800" />
<rect x="906" y="417" width="1" height="166" fill="#003800" />
<rect x="917" y="417" width="1" height="166" fill="#003800" />
<rect x="928" y="417" width="1" height="166" fill="#003800" />
<rect x="939" y="417" width="1" height="166" fill="#006400" />
<rect x="949" y="417" width="1" height="166" fill="#003800" />
<rect x="960" y="417" width="1" height="166" fill="#003800" />
<rect x="971" y="417" width="1" height="166" fill="#003800" />
<rect x="982" y="417" width="1" height="166" fill="#003800" />
<rect x="993" y="417" width="1" height="166" fill="#006400" />
<rect x="1004" y="417" width="1" height="166" fill="#003800" />
<rect x="1014" y="417" width="1" height="166" fill="#003800" />
<rect x="1025" y="417" width="1" height="166" fill="#003800" />
<rect x="1036" y="417" width="1" height="166" fill="#003800" />
<rect x="1047" y="417" width="1" height="166" fill="#006400" />
<rect x="1058" y="417" width="1" height="166" fill="#003800" />
<rect x="1069" y="417" width="1" height="166" fill="#003800" />
<rect x="1079" y="417" width="1" height="166" fill="#003800" />
<rect x="1090" y="417" width="1" height="166" fill="#003800" />
<rect x="397" y="444" width="705" height="1" fill="#006400" />
<rect x="397" y="472" width="705" height="1" fill="#006400" />
<rect x="397" y="499" width="705" height="1" fill="#006400" />
<rect x="397" y="527" width="705" height="1" fill="#006400" />
<rect x="397" y="554" width="705" height="1" fill="#006400" />
<path d="M397 502 L397 491 L401 491 L401 493 L404 493 L404 493 L409 493 L409 493 L411 493 L411 492 L413 492 L413 492 L415 492 L415 493 L419 493 L419 492 L421 492 L421 492 L424 492 L424 492 L426 492 L426 492 L428 492 L428 491 L433 491 L433 492 L438 492 L438 492 L440 492 L440 492 L443 492 L443 493 L445 493 L445 492 L450 492 L450 492 L452 492 L452 492 L454 492 L454 493 L457 493 L457 492 L459 492 L459 492 L464 492 L464 492 L466 492 L466 492 L469 492 L469 492 L471 492 L471 492 L474 492 L474 493 L478 493 L478 491 L483 491 L483 492 L486 492 L486 492 L488 492 L488 492 L492 492 L492 493 L495 493 L495 492 L497 492 L497 492 L500 492 L500 492 L504 492 L504 492 L506 492 L506 493 L508 493 L508 492 L510 492 L510 492 L513 492 L513 492 L518 492 L518 491 L523 491 L523 491 L527 491 L527 492 L532 492 L532 491 L537 491 L537 491 L541 491 L541 493 L545 493 L545 492 L548 492 L548 492 L551 492 L551 491 L554 491 L554 492 L556 492 L556 492 L560 492 L560 492 L565 492 L565 492 L569 492 L569 492 L572 492 L572 502 L569 502 L569 502 L565 502 L565 502 L560 502 L560 502 L556 502 L556 501 L554 501 L554 502 L551 502 L551 501 L548 501 L548 501 L545 501 L545 502 L541 502 L541 502 L537 502 L537 502 L532 502 L532 501 L527 501 L527 502 L523 502 L523 503 L518 503 L518 502 L513 502 L513 502 L510 502 L510 502 L508 502 L508 503 L506 503 L506 502 L504 502 L504 502 L500 502 L500 502 L497 502 L497 501 L495 501 L495 502 L492 502 L492 502 L488 502 L488 502 L486 502 L486 502 L483 502 L483 502 L478 502 L478 503 L474 503 L474 501 L471 501 L471 502 L469 502 L469 501 L466 501 L466 502 L464 502 L464 503 L459 503 L459 502 L457 502 L457 502 L454 502 L454 503 L452 503 L452 502 L450 502 L450 502 L445 502 L445 502 L443 502 L443 502 L440 502 L440 501 L438 501 L438 502 L433 502 L433 502 L428 502 L428 503 L426 503 L426 502 L424 502 L424 501 L421 501 L421 502 L419 502 L419 502 L415 502 L415 503 L413 503 L413 502 L411 502 L411 502 L409 502 L409 502 L404 502 L404 502 L401 502 L401 502 L397 502 Z" fill="#fff"/>
<path d="M646 502 L646 493 L649 493 L649 501 L646 501 Z" fill="#fff"/>
<path d="M723 502 L723 492 L728 492 L728 493 L730 493 L730 493 L735 493 L735 493 L739 493 L739 492 L741 492 L741 493 L743 493 L743 492 L748 492 L748 492 L751 492 L751 492 L756 492 L756 491 L759 491 L759 492 L764 492 L764 493 L768 493 L768 492 L770 492 L770 492 L775 492 L775 491 L780 491 L780 492 L785 492 L785 492 L787 492 L787 492 L790 492 L790 492 L793 492 L793 492 L796 492 L796 492 L798 492 L798 492 L801 492 L801 492 L806 492 L806 492 L809 492 L809 492 L814 492 L814 492 L818 492 L818 491 L821 491 L821 492 L824 492 L824 491 L826 491 L826 492 L828 492 L828 491 L830 491 L830 491 L833 491 L833 492 L838 492 L838 492 L841 492 L841 492 L844 492 L844 492 L846 492 L846 492 L850 492 L850 491 L853 491 L853 492 L857 492 L857 492 L860 492 L860 492 L864 492 L864 493 L868 493 L868 492 L873 492 L873 492 L876 492 L876 493 L878 493 L878 492 L882 492 L882 493 L887 493 L887 492 L892 492 L892 492 L895 492 L895 491 L898 491 L898 492 L900 492 L900 492 L905 492 L905 493 L908 493 L908 492 L910 492 L910 492 L913 492 L913 492 L916 492 L916 492 L919 492 L919 492 L924 492 L924 492 L926 492 L926 492 L928 492 L928 492 L932 492 L932 492 L937 492 L937 491 L939 491 L939 492 L941 492 L941 492 L944 492 L944 492 L947 492 L947 492 L951 492 L951 492 L953 492 L953 492 L955 492 L955 491 L960 491 L960 493 L962 493 L962 492 L964 492 L964 493 L969 493 L969 492 L973 492 L973 492 L976 492 L976 492 L980 492 L980 492 L985 492 L985 492 L990 492 L990 492 L993 492 L993 493 L997 493 L997 493 L1000 493 L1000 492 L1005 492 L1005 492 L1008 492 L1008 492 L1013 492 L1013 492 L1015 492 L1015 492 L1020 492 L1020 492 L1025 492 L1025 492 L1029 492 L1029 493 L1031 493 L1031 493 L1034 493 L1034 492 L1039 492 L1039 491 L1041 491 L1041 491 L1044 491 L1044 491 L1048 491 L1048 492 L1050 492 L1050 492 L1053 492 L1053 492 L1057 492 L1057 491 L1060 491 L1060 492 L1064 492 L1064 492 L1067 492 L1067 492 L1072 492 L1072 492 L1075 492 L1075 492 L1077 492 L1077 492 L1082 492 L1082 491 L1087 491 L1087 493 L1090 493 L1090 492 L1093 492 L1093 492 L1096 492 L1096 491 L1101 491 L1101 492 L1102 492 L1102 502 L1101 502 L1101 502 L1096 502 L1096 502 L1093 502 L1093 502 L1090 502 L1090 502 L1087 502 L1087 501 L1082 501 L1082 502 L1077 502 L1077 502 L1075 502 L1075 502 L1072 502 L1072 502 L1067 502 L1067 501 L1064 501 L1064 502 L1060 502 L1060 502 L1057 502 L1057 502 L1053 502 L1053 501 L1050 501 L1050 502 L1048 502 L1048 502 L1044 502 L1044 502 L1041 502 L1041 502 L1039 502 L1039 503 L1034 503 L1034 502 L1031 502 L1031 503 L1029 503 L1029 502 L1025 502 L1025 502 L1020 502 L1020 502 L1015 502 L1015 502 L1013 502 L1013 502 L1008 502 L1008 502 L1005 502 L1005 503 L1000 503 L1000 502 L997 502 L997 502 L993 502 L993 502 L990 502 L990 501 L985 501 L985 502 L980 502 L980 502 L976 502 L976 502 L973 502 L973 502 L969 502 L969 503 L964 503 L964 503 L962 503 L962 502 L960 502 L960 501 L955 501 L955 502 L953 502 L953 502 L951 502 L951 502 L947 502 L947 502 L944 502 L944 502 L941 502 L941 501 L939 501 L939 502 L937 502 L937 503 L932 503 L932 503 L928 503 L928 503 L926 503 L926 502 L924 502 L924 502 L919 502 L919 502 L916 502 L916 502 L913 502 L913 501 L910 501 L910 503 L908 503 L908 502 L905 502 L905 503 L900 503 L900 502 L898 502 L898 502 L895 502 L895 502 L892 502 L892 502 L887 502 L887 502 L882 502 L882 501 L878 501 L878 502 L876 502 L876 502 L873 502 L873 502 L868 502 L868 502 L864 502 L864 502 L860 502 L860 502 L857 502 L857 503 L853 503 L853 503 L850 503 L850 502 L846 502 L846 501 L844 501 L844 502 L841 502 L841 502 L838 502 L838 502 L833 502 L833 502 L830 502 L830 502 L828 502 L828 502 L826 502 L826 502 L824 502 L824 502 L821 502 L821 502 L818 502 L818 502 L814 502 L814 501 L809 501 L809 503 L806 503 L806 502 L801 502 L801 503 L798 503 L798 502 L796 502 L796 502 L793 502 L793 502 L790 502 L790 502 L787 502 L787 502 L785 502 L785 503 L780 503 L780 502 L775 502 L775 502 L770 502 L770 502 L768 502 L768 502 L764 502 L764 503 L759 503 L759 502 L756 502 L756 502 L751 502 L751 502 L748 502 L748 502 L743 502 L743 501 L741 501 L741 503 L739 503 L739 502 L735 502 L735 502 L730 502 L730 502 L728 502 L728 502 L723 502 Z" fill="#fff"/>
<rect x="572" y="432" width="74" height="130" fill="#fff"/>
<rect x="619" y="562" width="4" height="1" fill="#fff"/>
<rect x="619" y="562" width="2" height="1" fill="#fff"/>
<rect x="583" y="431" width="3" height="1" fill="#fff"/>
<rect x="571" y="535" width="1" height="6" fill="#fff"/>
<rect x="636" y="431" width="5" height="1" fill="#fff"/>
<rect x="611" y="562" width="3" height="1" fill="#fff"/>
<rect x="596" y="431" width="2" height="1" fill="#fff"/>
<rect x="598" y="562" width="3" height="1" fill="#fff"/>
<rect x="646" y="527" width="1" height="5" fill="#fff"/>
<rect x="625" y="562" width="3" height="1" fill="#fff"/>
<rect x="596" y="562" width="2" height="1" fill="#fff"/>
<rect x="613" y="562" width="4" height="1" fill="#fff"/>
<rect x="608" y="431" width="3" height="1" fill="#fff"/>
<rect x="636" y="431" width="5" height="1" fill="#fff"/>
<rect x="604" y="562" width="4" height="1" fill="#fff"/>
<rect x="646" y="543" width="1" height="2" fill="#fff"/>
<rect x="602" y="431" width="5" height="1" fill="#fff"/>
<rect x="646" y="494" width="1" height="2" fill="#fff"/>
<rect x="638" y="562" width="5" height="1" fill="#fff"/>
<rect x="646" y="464" width="1" height="2" fill="#fff"/>
<rect x="583" y="431" width="2" height="1" fill="#fff"/>
<rect x="646" y="524" width="1" height="5" fill="#fff"/>
<rect x="627" y="431" width="2" height="1" fill="#fff"/>
<rect x="646" y="462" width="1" height="2" fill="#fff"/>
<rect x="571" y="471" width="1" height="3" fill="#fff"/>
<rect x="571" y="499" width="1" height="5" fill="#fff"/>
<rect x="571" y="446" width="1" height="2" fill="#fff"/>
<rect x="639" y="562" width="3" height="1" fill="#fff"/>
<rect x="588" y="562" width="2" height="1" fill="#fff"/>
<rect x="593" y="431" width="5" height="1" fill="#fff"/>
<rect x="594" y="562" width="3" height="1" fill="#fff"/>
<rect x="589" y="562" width="3" height="1" fill="#fff"/>
<rect x="601" y="431" width="4" height="1" fill="#fff"/>
<rect x="586" y="431" width="5" height="1" fill="#fff"/>
<rect x="588" y="431" width="5" height="1" fill="#fff"/>
<rect x="646" y="461" width="1" height="2" fill="#fff"/>
<rect x="571" y="523" width="1" height="4" fill="#fff"/>
<rect x="571" y="457" width="1" height="4" fill="#fff"/>
<rect x="571" y="496" width="1" height="3" fill="#fff"/>
<rect x="586" y="562" width="3" height="1" fill="#fff"/>
<rect x="573" y="467" width="1" height="1" fill="#000"/>
<rect x="582" y="561" width="1" height="1" fill="#000"/>
<rect x="636" y="561" width="1" height="1" fill="#000"/>
<rect x="572" y="553" width="1" height="1" fill="#000"/>
<rect x="645" y="441" width="1" height="1" fill="#000"/>
<rect x="573" y="486" width="1" height="1" fill="#000"/>
<rect x="587" y="561" width="1" height="1" fill="#000"/>
<rect x="635" y="432" width="1" height="1" fill="#000"/>
<rect x="638" y="560" width="1" height="1" fill="#000"/>
<rect x="645" y="438" width="1" height="1" fill="#000"/>
<rect x="600" y="560" width="1" height="1" fill="#000"/>
<rect x="605" y="432" width="1" height="1" fill="#000"/>
<rect x="644" y="444" width="1" height="1" fill="#000"/>
<rect x="572" y="504" width="1" height="1" fill="#000"/>
<rect x="649" y="432" width="74" height="131" fill="#fff"/>
<rect x="723" y="481" width="1" height="4" fill="#fff"/>
<rect x="723" y="487" width="1" height="2" fill="#fff"/>
<rect x="648" y="457" width="1" height="6" fill="#fff"/>
<rect x="723" y="457" width="1" height="4" fill="#fff"/>
<rect x="648" y="493" width="1" height="5" fill="#fff"/>
<rect x="693" y="431" width="5" height="1" fill="#fff"/>
<rect x="651" y="431" width="2" height="1" fill="#fff"/>
<rect x="723" y="440" width="1" height="3" fill="#fff"/>
<rect x="648" y="547" width="1" height="4" fill="#fff"/>
<rect x="673" y="563" width="2" height="1" fill="#fff"/>
<rect x="700" y="563" width="4" height="1" fill="#fff"/>
<rect x="723" y="470" width="1" height="6" fill="#fff"/>
<rect x="723" y="513" width="1" height="2" fill="#fff"/>
<rect x="666" y="431" width="5" height="1" fill="#fff"/>
<rect x="648" y="492" width="1" height="5" fill="#fff"/>
<rect x="723" y="549" width="1" height="5" fill="#fff"/>
<rect x="684" y="431" width="2" height="1" fill="#fff"/>
<rect x="723" y="527" width="1" height="3" fill="#fff"/>
<rect x="648" y="474" width="1" height="4" fill="#fff"/>
<rect x="705" y="563" width="2" height="1" fill="#fff"/>
<rect x="648" y="482" width="1" height="3" fill="#fff"/>
<rect x="654" y="431" width="2" height="1" fill="#fff"/>
<rect x="688" y="563" width="3" height="1" fill="#fff"/>
<rect x="723" y="545" width="1" height="2" fill="#fff"/>
<rect x="655" y="563" width="2" height="1" fill="#fff"/>
<rect x="719" y="563" width="5" height="1" fill="#fff"/>
<rect x="658" y="431" width="5" height="1" fill="#fff"/>
<rect x="648" y="518" width="1" height="6" fill="#fff"/>
<rect x="723" y="517" width="1" height="2" fill="#fff"/>
<rect x="723" y="470" width="1" height="4" fill="#fff"/>
<rect x="648" y="480" width="1" height="4" fill="#fff"/>
<rect x="667" y="431" width="3" height="1" fill="#fff"/>
<rect x="669" y="431" width="3" height="1" fill="#fff"/>
<rect x="677" y="563" width="3" height="1" fill="#fff"/>
<rect x="648" y="462" width="1" height="2" fill="#fff"/>
<rect x="648" y="559" width="1" height="2" fill="#fff"/>
<rect x="712" y="431" width="3" height="1" fill="#fff"/>
<rect x="723" y="549" width="1" height="2" fill="#fff"/>
<rect x="723" y="462" width="1" height="2" fill="#fff"/>
<rect x="718" y="431" width="3" height="1" fill="#fff"/>
<rect x="677" y="433" width="1" height="1" fill="#000"/>
<rect x="721" y="532" width="1" height="1" fill="#000"/>
<rect x="651" y="561" width="1" height="1" fill="#000"/>
<rect x="721" y="477" width="1" height="1" fill="#000"/>
<rect x="721" y="439" width="1" height="1" fill="#000"/>
<rect x="714" y="432" width="1" height="1" fill="#000"/>
<rect x="679" y="561" width="1" height="1" fill="#000"/>
<rect x="721" y="444" width="1" height="1" fill="#000"/>
<rect x="722" y="503" width="1" height="1" fill="#000"/>
<rect x="649" y="534" width="1" height="1" fill="#000"/>
<rect x="662" y="432" width="1" height="1" fill="#000"/>
<rect x="678" y="561" width="1" height="1" fill="#000"/>
<rect x="721" y="518" width="1" height="1" fill="#000"/>
<rect x="649" y="473" width="1" height="1" fill="#000"/>
<rect x="396" y="416" width="706" height="1" fill="#7a7a7a" />
<rect x="396" y="416" width="1" height="167" fill="#7a7a7a" />
<rect x="396" y="583" width="707" height="1" fill="#F0F0F0" />
<rect x="1102" y="416" width="1" height="168" fill="#F0F0F0" />
<rect x="390" y="417" width="5" height="1" fill="#000" />
<text x="387.5" y="422" font-size="11" text-anchor="end" textLength="11.04" lengthAdjust="spacingAndGlyphs" stroke="#000" stroke-width="0.15" fill="#000" >8k</text>
<rect x="390" y="444" width="5" height="1" fill="#000" />
<text x="387.5" y="449" font-size="11" text-anchor="end" textLength="11.04" lengthAdjust="spacingAndGlyphs" stroke="#000" stroke-width="0.15" fill="#000" >7k</text>
<rect x="390" y="472" width="5" height="1" fill="#000" />
<text x="387.5" y="477" font-size="11" text-anchor="end" textLength="11.04" lengthAdjust="spacingAndGlyphs" stroke="#000" stroke-width="0.15" fill="#000" >6k</text>
<rect x="390" y="499" width="5" height="1" fill="#000" />
<text x="387.5" y="504" font-size="11" text-anchor="end" textLength="11.04" lengthAdjust="spacingAndGlyphs" stroke="#000" stroke-width="0.15" fill="#000" >5k</text>
<rect x="390" y="527" width="5" height="1" fill="#000" />
<text x="387.5" y="532" font-size="11" text-anchor="end" textLength="11.04" lengthAdjust="spacingAndGlyphs" stroke="#000" stroke-width="0.15" fill="#000" >4k</text>
<rect x="390" y="554" width="5" height="1" fill="#000" />
<text x="387.5" y="559" font-size="11" text-anchor="end" textLength="11.04" lengthAdjust="spacingAndGlyphs" stroke="#000" stroke-width="0.15" fill="#000" >3k</text>
<rect x="390" y="582" width="5" height="1" fill="#000" />
<text x="387.5" y="587" font-size="11" text-anchor="end" textLength="11.04" lengthAdjust="spacingAndGlyphs" stroke="#000" stroke-width="0.15" fill="#000" >2k</text>
<rect x="397" y="585" width="1" height="5" fill="#000" />
<text x="397.5" y="601" font-size="11" text-anchor="middle" textLength="5.85" lengthAdjust="spacingAndGlyphs" stroke="#000" stroke-width="0.15" fill="#000" >0</text>
<rect x="451" y="585" width="1" height="5" fill="#000" />
<text x="451.5" y="601" font-size="11" text-anchor="middle" textLength="23.4" lengthAdjust="spacingAndGlyphs" stroke="#000" stroke-width="0.15" fill="#000" >1000</text>
<rect x="505" y="585" width="1" height="5" fill="#000" />
<text x="505.5" y="601" font-size="11" text-anchor="middle" textLength="23.4" lengthAdjust="spacingAndGlyphs" stroke="#000" stroke-width="0.15" fill="#000" >2000</text>
<rect x="559" y="585" width="1" height="5" fill="#000" />
<text x="559.5" y="601" font-size="11" text-anchor="middle" textLength="23.4" lengthAdjust="spacingAndGlyphs" stroke="#000" stroke-width="0.15" fill="#000" >3000</text>
<rect x="614" y="585" width="1" height="5" fill="#000" />
<text x="614.5" y="601" font-size="11" text-anchor="middle" textLength="23.4" lengthAdjust="spacingAndGlyphs" stroke="#000" stroke-width="0.15" fill="#000" >4000</text>
<rect x="668" y="585" width="1" height="5" fill="#000" />
<text x="668.5" y="601" font-size="11" text-anchor="middle" textLength="23.4" lengthAdjust="spacingAndGlyphs" stroke="#000" stroke-width="0.15" fill="#000" >5000</text>
<rect x="722" y="585" width="1" height="5" fill="#000" />
<text x="722.5" y="601" font-size="11" text-anchor="middle" textLength="23.4" lengthAdjust="spacingAndGlyphs" stroke="#000" stroke-width="0.15" fill="#000" >6000</text>
<rect x="776" y="585" width="1" height="5" fill="#000" />
<text x="776.5" y="601" font-size="11" text-anchor="middle" textLength="23.4" lengthAdjust="spacingAndGlyphs" stroke="#000" stroke-width="0.15" fill="#000" >7000</text>
<rect x="830" y="585" width="1" height="5" fill="#000" />
<text x="830.5" y="601" font-size="11" text-anchor="middle" textLength="23.4" lengthAdjust="spacingAndGlyphs" stroke="#000" stroke-width="0.15" fill="#000" >8000</text>
<rect x="884" y="585" width="1" height="5" fill="#000" />
<text x="884.5" y="601" font-size="11" text-anchor="middle" textLength="23.4" lengthAdjust="spacingAndGlyphs" stroke="#000" stroke-width="0.15" fill="#000" >9000</text>
<rect x="939" y="585" width="1" height="5" fill="#000" />
<text x="939.5" y="601" font-size="11" text-anchor="middle" textLength="29.25" lengthAdjust="spacingAndGlyphs" stroke="#000" stroke-width="0.15" fill="#000" >10000</text>
<rect x="993" y="585" width="1" height="5" fill="#000" />
<text x="993.5" y="601" font-size="11" text-anchor="middle" textLength="29.25" lengthAdjust="spacingAndGlyphs" stroke="#000" stroke-width="0.15" fill="#000" >11000</text>
<rect x="1047" y="585" width="1" height="5" fill="#000" />
<text x="1047.5" y="601" font-size="11" text-anchor="middle" textLength="29.25" lengthAdjust="spacingAndGlyphs" stroke="#000" stroke-width="0.15" fill="#000" >12000</text>
<rect x="1101" y="585" width="1" height="5" fill="#000" />
<text x="1101.5" y="601" font-size="11" text-anchor="middle" textLength="29.25" lengthAdjust="spacingAndGlyphs" stroke="#000" stroke-width="0.15" fill="#000" >13000</text>
<text x="371" y="499" font-size="11" text-anchor="middle" textLength="47.5" lengthAdjust="spacingAndGlyphs" stroke="#000" stroke-width="0.15" fill="#000" transform="rotate(-90 371 499)">Amplitude</text>
<text x="721.5" y="615.5" font-size="11" textLength="54.5" lengthAdjust="spacingAndGlyphs" stroke="#000" stroke-width="0.15" fill="#000" >Time (usec)</text>
<rect x="1029" y="382" width="97" height="21" fill="#C6C6C6" />
<rect x="1029" y="382" width="97" height="1.5" fill="#E4E4E4" />
<rect x="1029" y="382" width="10" height="21" fill="#D8D8D8" />
<rect x="1031" y="403" width="95" height="1" fill="#9a9a9a" />
<rect x="1111" y="382" width="15" height="21" fill="url(#cyl)" />
<text x="1044.5" y="395.5" font-size="11" textLength="27" lengthAdjust="spacingAndGlyphs" stroke="#000" stroke-width="0.15" fill="#000" >Plot 0</text>
<rect x="1083" y="384" width="28" height="16" fill="#000" />
<rect x="1083" y="400" width="29" height="1" fill="#E8E8E8" />
<rect x="1111" y="384" width="1" height="17" fill="#E8E8E8" />
<path d="M1086.5 395.5 L1095.5 387.5 L1105.5 395.5 L1110.5 392" fill="none" stroke="#fff" stroke-width="1"/>
<rect x="1084.5" y="393.5" width="4" height="4" fill="#000" stroke="#fff" stroke-width="1"/>
<rect x="1086.0" y="395.0" width="1" height="1" fill="#fff" />
<rect x="1093.5" y="385.5" width="4" height="4" fill="#000" stroke="#fff" stroke-width="1"/>
<rect x="1095.0" y="387.0" width="1" height="1" fill="#fff" />
<rect x="1103.5" y="393.5" width="4" height="4" fill="#000" stroke="#fff" stroke-width="1"/>
<rect x="1105.0" y="395.0" width="1" height="1" fill="#fff" />
<rect x="331" y="625" width="89" height="25" fill="#C4C4C4" />
<rect x="331" y="625" width="89" height="1" fill="#D0D0D0" opacity="0.6"/>
<rect x="331" y="626" width="82" height="2" fill="#E2E2E2" />
<rect x="331" y="625" width="12" height="25" fill="#D8D8D8" />
<rect x="406" y="625" width="14" height="25" fill="url(#cyl)" />
<rect x="331" y="649" width="89" height="1" fill="#8a8a8a" />
<rect x="344" y="630" width="20" height="17" fill="#E2E2E2" />
<rect x="345" y="631" width="19" height="16" fill="#8a8a8a" />
<rect x="345" y="631" width="18" height="15" fill="#C8C8C8" />
<rect x="346.5" y="633" width="3" height="3" fill="#2E7A2E" />
<rect x="365" y="630" width="20" height="17" fill="#6a6a6a" />
<rect x="366" y="631" width="19" height="16" fill="#b4b4b4" />
<rect x="366" y="631" width="18" height="15" fill="#8E8E8E" />
<rect x="367.5" y="633" width="3" height="3" fill="#30E030" />
<rect x="386" y="630" width="20" height="17" fill="#E2E2E2" />
<rect x="387" y="631" width="19" height="16" fill="#8a8a8a" />
<rect x="387" y="631" width="18" height="15" fill="#C8C8C8" />
<rect x="388.5" y="633" width="3" height="3" fill="#2E7A2E" />
<path d="M348.0 639.5 H361.0 M354.5 633.0 V646.0" stroke="#000" stroke-width="1.2"/>
<circle cx="354.5" cy="639.5" r="1.8" fill="#fff" stroke="#000" stroke-width="1"/>
<circle cx="377.5" cy="636.5" r="4.3" fill="#DDDDF4" stroke="#000" stroke-width="1.2"/>
<path d="M375.0 636.5 H380.0 M377.5 634.0 V639.0" stroke="#000" stroke-width="1.1"/>
<path d="M374.3 639.7 L369.0 645.0" stroke="#000" stroke-width="2.4" stroke-linecap="round"/>
<path d="M374.3 639.7 L369.0 645.0" stroke="#ddd" stroke-width="0.9"/>
<path d="M378.0 642.5 H383.0 L380.5 645.0 Z" fill="#000"/>
<path d="M392 638 Q393.5 636.5 394.5 639 M394.5 640 V634.5 Q395.5 633 396.5 634.5 V639 M396.5 634 Q397.5 632.5 398.5 634 V639 M398.5 634.5 Q399.5 633 400.5 634.5 V639 M400.5 636 Q401.5 634.5 402.5 636 V642 Q402 644 400.5 645.5 M392 638 Q392.5 641 395 645.5" fill="none" stroke="#000" stroke-width="1"/>
</svg>
</body></html>
